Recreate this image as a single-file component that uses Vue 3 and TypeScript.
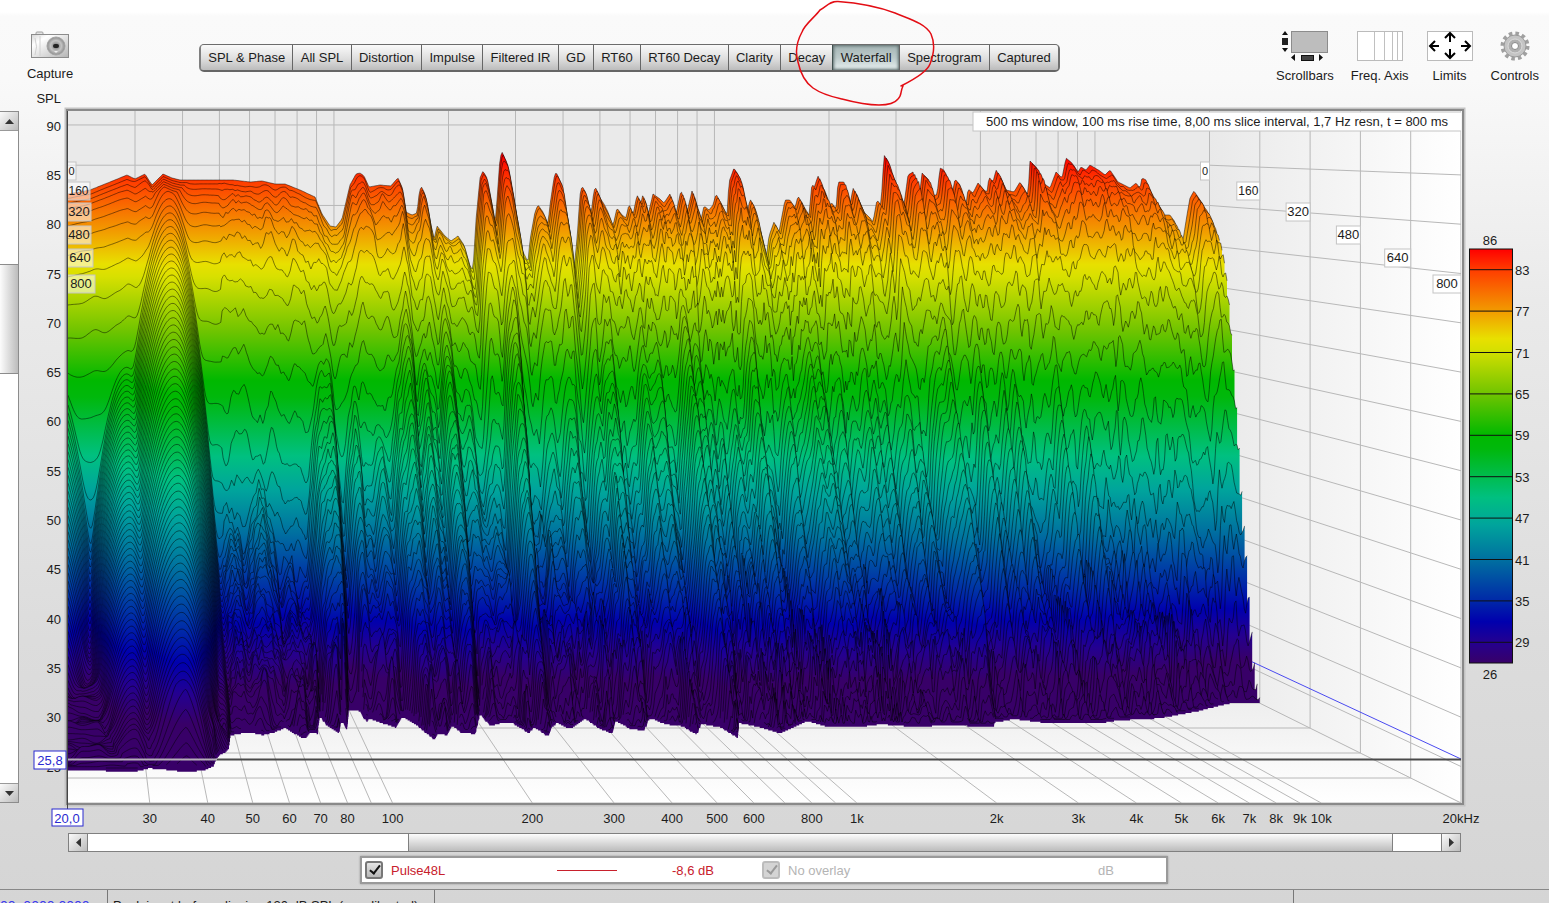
<script setup lang="ts">
import { ref } from 'vue'

type Point = [number, number]

const tabs = [
  'SPL & Phase', 'All SPL', 'Distortion', 'Impulse', 'Filtered IR', 'GD', 'RT60',
  'RT60 Decay', 'Clarity', 'Decay', 'Waterfall', 'Spectrogram', 'Captured',
]
const activeTab = ref('Waterfall')
const traceVisible = ref(true)
const overlayVisible = ref(true)

/* Plot geometry: s runs from 0 (back plane, t = 0) to 1 (front plane, t = 800 ms) */
const LEFT = 68
const RIGHT = 1461
const TOP = 111
const BOTTOM = 803
const BACK_WIDTH = 1141.5
const DEPTH_WIDTH = 251.5
const FLOOR_DB = 21.3

const floorY = (s: number) => 678 + 125 * s
const dbScale = (s: number) => 8.05 + 1.81 * s
const yOf = (db: number, s: number) => floorY(s) - (db - FLOOR_DB) * dbScale(s)
const xOf = (u: number, s: number) => LEFT + u * (BACK_WIDTH + DEPTH_WIDTH * s)
const uOfFreq = (f: number) => Math.log10(f / 20) / 3

const dbTicks = [90, 85, 80, 75, 70, 65, 60, 55, 50, 45, 40, 35, 30, 25]
const freqs = [
  30, 40, 50, 60, 70, 80, 90, 100, 200, 300, 400, 500, 600, 700, 800, 900,
  1000, 2000, 3000, 4000, 5000, 6000, 7000, 8000, 9000, 10000,
]
const freqLabels = freqs
  .filter((f) => f !== 90 && f !== 700 && f !== 900)
  .map((f) => ({ x: xOf(uOfFreq(f), 1), text: f >= 1000 ? `${f / 1000}k` : `${f}` }))

const timeTags = [
  { t: 0, y: 171, w: 9, size: 11 },
  { t: 160, y: 191, w: 23, size: 12 },
  { t: 320, y: 212, w: 24, size: 13 },
  { t: 480, y: 235, w: 24, size: 13 },
  { t: 640, y: 258, w: 26, size: 13 },
  { t: 800, y: 284, w: 28, size: 13 },
].map((tag) => ({ ...tag, right: xOf(1, tag.t / 800) }))

const palette = [
  { db: 86, color: '#ff0000' },
  { db: 83, color: '#ff3c00' },
  { db: 77, color: '#f29b00' },
  { db: 73, color: '#e8e000' },
  { db: 71.5, color: '#d8e000' },
  { db: 65, color: '#70c400' },
  { db: 59, color: '#00b800' },
  { db: 57, color: '#00b80c' },
  { db: 50, color: '#00c080' },
  { db: 46, color: '#00a49c' },
  { db: 41, color: '#0070a0' },
  { db: 35, color: '#0028a8' },
  { db: 32, color: '#0000ae' },
  { db: 29, color: '#240090' },
  { db: 26, color: '#380068' },
]
const scaleTicks = [83, 77, 71, 65, 59, 53, 47, 41, 35, 29]
const scaleY = (db: number) => 249 + (86 - db) * 6.9

/* Measured response at t = 0 */
const response: Point[] = [
  [68, 194], [90, 190], [110, 182], [127, 175], [135, 179], [145, 174], [152, 185], [163, 174],
  [172, 178], [180, 180], [210, 180], [233, 180], [250, 182], [262, 181], [275, 184], [285, 184],
  [300, 190], [315, 197], [322, 214], [330, 226], [336, 227], [342, 219], [350, 185], [356, 174],
  [360, 173], [364, 176], [369, 187], [380, 185], [391, 186], [395, 181], [398, 178], [402, 187],
  [406, 212], [412, 215], [417, 213], [419, 195], [421, 186], [425, 194], [431, 225], [434, 240],
  [437, 226], [445, 236], [451, 241], [458, 236], [464, 245], [470, 266], [473, 270], [476, 220],
  [480, 178], [483, 171], [487, 178], [492, 204], [495, 225], [497, 200], [500, 158], [502, 152],
  [507, 163], [512, 190], [516, 212], [522, 250], [528, 262], [530, 240], [535, 212], [538, 205],
  [543, 212], [548, 224], [550, 205], [554, 178], [556, 172], [562, 185], [568, 225], [573, 278],
  [577, 240], [580, 195], [582, 186], [586, 193], [591, 215], [594, 190], [596, 188], [600, 198],
  [604, 204], [608, 212], [613, 226], [617, 208], [622, 215], [626, 218], [629, 204], [633, 215],
  [637, 195], [641, 203], [643, 194], [648, 215], [653, 194], [660, 199], [664, 203], [670, 194],
  [676, 214], [681, 190], [687, 212], [692, 191], [698, 210], [701, 220], [704, 206], [709, 210],
  [713, 205], [716, 194], [722, 205], [727, 215], [729, 182], [734, 168], [740, 178], [745, 205],
  [747, 215], [750, 199], [755, 208], [762, 240], [766, 260], [769, 236], [774, 222], [779, 232],
  [785, 200], [790, 200], [795, 208], [798, 196], [803, 205], [809, 215], [812, 183], [814, 188],
  [818, 176], [824, 190], [829, 205], [832, 203], [836, 210], [838, 182], [844, 182], [850, 205],
  [853, 188], [858, 198], [864, 212], [870, 218], [873, 222], [877, 200], [881, 205], [884, 155],
  [889, 163], [893, 178], [900, 195], [904, 205], [908, 175], [913, 172], [919, 200], [922, 173],
  [929, 180], [933, 195], [937, 195], [940, 168], [944, 170], [948, 182], [952, 195], [955, 179],
  [960, 185], [966, 205], [968, 189], [973, 193], [978, 183], [984, 190], [987, 192], [989, 177],
  [993, 182], [996, 170], [1002, 180], [1006, 190], [1014, 192], [1020, 182], [1028, 195],
  [1030, 161], [1037, 168], [1042, 182], [1050, 188], [1056, 172], [1062, 178], [1066, 158],
  [1072, 163], [1078, 172], [1081, 167], [1086, 170], [1090, 165], [1100, 171], [1105, 175],
  [1110, 170], [1118, 182], [1130, 188], [1136, 183], [1140, 188], [1142, 178], [1146, 180],
  [1152, 195], [1158, 205], [1163, 215], [1170, 215], [1175, 222], [1180, 238], [1183, 240],
  [1187, 215], [1190, 198], [1194, 191], [1200, 200], [1210, 218],
]

/* Where each frequency has decayed below the floor of the plot */
const fadeOut: Point[] = [
  [68, 771], [90, 771], [110, 772], [138, 772], [150, 769], [170, 771], [187, 773], [205, 771],
  [214, 767], [217, 760], [222, 755], [229, 751], [231, 736], [250, 733], [262, 736], [275, 733],
  [285, 729], [300, 738], [307, 738], [312, 733], [318, 735], [320, 718], [325, 725], [340, 735],
  [341, 722], [347, 733], [349, 711], [358, 711], [366, 723], [370, 720], [385, 725], [397, 729],
  [403, 718], [415, 725], [434, 741], [440, 734], [447, 737], [453, 727], [460, 733], [476, 735],
  [480, 716], [490, 727], [505, 723], [512, 724], [530, 735], [534, 728], [548, 738], [552, 729],
  [557, 724], [570, 730], [585, 720], [600, 730], [613, 735], [616, 722], [630, 730], [645, 731],
  [650, 719], [665, 725], [682, 727], [697, 736], [702, 725], [720, 728], [738, 739], [740, 724],
  [755, 727], [780, 734], [795, 728], [808, 722], [825, 727], [860, 728], [880, 725], [920, 728],
  [940, 726], [975, 727], [994, 727], [996, 723], [1014, 720], [1040, 723], [1068, 724],
  [1107, 723], [1120, 721], [1160, 719], [1198, 712], [1214, 708], [1231, 704], [1262, 703],
]

function interpolate(points: Point[], x: number): number {
  if (x <= points[0][0]) return points[0][1]
  for (let i = 1; i < points.length; i++) {
    if (x <= points[i][0]) {
      const [x0, y0] = points[i - 1]
      const [x1, y1] = points[i]
      return y0 + ((x - x0) / (x1 - x0 || 1)) * (y1 - y0)
    }
  }
  return points[points.length - 1][1]
}

let seed = 48271
function random(): number {
  seed = (seed * 1664525 + 1013904223) >>> 0
  return seed / 4294967296
}

function hash(a: number, b: number): number {
  let h = (a * 374761393 + b * 668265263) | 0
  h = Math.imul(h ^ (h >>> 13), 1274126177)
  return ((h ^ (h >>> 16)) >>> 0) / 2147483648 - 1
}

function noise(x: number, y: number): number {
  const xi = Math.floor(x)
  const yi = Math.floor(y)
  const fx = (1 - Math.cos((x - xi) * Math.PI)) / 2
  const fy = y - yi
  const a = hash(xi, yi) * (1 - fx) + hash(xi + 1, yi) * fx
  const b = hash(xi, yi + 1) * (1 - fx) + hash(xi + 1, yi + 1) * fx
  return a * (1 - fy) + b * fy
}

/* One resonance: its place, starting level, decay per slice and how steeply each side falls */
interface Mode { x: number; level: number; rate: number; below: number; above: number }

const endPoints: Point[] = fadeOut.map(([x, y]) => {
  const s = (y - 678) / 125
  return [((x - LEFT) / (BACK_WIDTH + DEPTH_WIDTH * s)) * BACK_WIDTH, s * 100]
})
const topPoints: Point[] = response.map(([x, y]) => [x - LEFT, FLOOR_DB + (678 - y) / dbScale(0)])

function buildModes(): Mode[] {
  const modes: Mode[] = [
    { x: -14, level: 70, rate: 0.85, below: 0.014, above: 0.014 },
    { x: 57, level: 68, rate: 0.62, below: 0.016, above: 0.03 },
    { x: 76, level: 84, rate: 1.9, below: 0.03, above: 0.03 },
    { x: 100, level: 86.5, rate: 0.8, below: 0.013, above: 0.018 },
    { x: 158, level: 52, rate: 0.62, below: 0.05, above: 0.04 },
    { x: 186, level: 60, rate: 0.9, below: 0.06, above: 0.06 },
    { x: 212, level: 50, rate: 0.7, below: 0.06, above: 0.06 },
    { x: 249, level: 74, rate: 1.25, below: 0.05, above: 0.05 },
  ]
  for (let i = 1; i < topPoints.length - 1; i++) {
    const [x, level] = topPoints[i]
    if (x < 270 || level < topPoints[i - 1][1] || level < topPoints[i + 1][1]) continue
    const life = interpolate(endPoints, x)
    const sharp = 0.05 + x * 0.00018
    modes.push({
      x,
      level: level - (x > 930 ? 3 : 0.3),
      rate: ((level - FLOOR_DB) / life) * (0.95 + 0.6 * random()),
      below: sharp,
      above: sharp,
    })
  }
  for (let i = 0; i < 330; i++) {
    const x = 135 + Math.pow(random(), 0.85) * 1006
    const life = interpolate(endPoints, x)
    const level = x < 240 ? 38 + 16 * random() : x > 900 ? 40 + 26 * random() : 46 + 32 * random()
    const sharp = (0.06 + x * 0.00035) * (0.5 + random())
    modes.push({
      x,
      level,
      rate: ((level - FLOOR_DB) / life) * (0.95 + 0.4 * random()),
      below: sharp,
      above: sharp * (0.6 + 0.8 * random()),
    })
  }
  return modes
}

const directDrop = [
  0, 0.5, 1.1, 1.8, 2.7, 3.9, 5.4, 7.4, 10, 13.4, 17.4, 22, 27, 32, 36.5, 40.5, 44, 47, 50, 53, 56, 59, 62, 65,
]

interface Slice { id: number; d: string; line: string; y1: number; y2: number }

function buildSlices(): Slice[] {
  const modes = buildModes()
  const slices: Slice[] = []
  const step = 1.3
  const columns = Math.round(BACK_WIDTH / step)
  for (let i = 0; i <= 77; i++) {
    const s = i / 100
    const base = floorY(s)
    let line = ''
    let fill = ''
    let open = false
    let lastX = 0
    for (let c = 0; c <= columns; c++) {
      const x = c * step
      const end = interpolate(endPoints, x)
      const sx = xOf(x / BACK_WIDTH, s)
      if (i > end) {
        if (open) fill += `L${lastX.toFixed(1)} ${base.toFixed(1)}Z`
        open = false
        continue
      }
      const top = interpolate(topPoints, x)
      let level = top
      if (i > 0) {
        const grain = Math.max(3, 13 - x * 0.013)
        const rough = Math.min(4.2, i * 0.25) * (x < 150 ? 0.25 : 1)
        const wobble = noise(x / grain, i / 3.2) * rough
        const drop = i < directDrop.length ? directDrop[i] : 70
        const direct = top - drop + wobble
        const reach = x < 110 ? 10 : x < 240 ? 16 : 28
        const tail = FLOOR_DB + 1 + reach * Math.pow(1 - i / (end + 1), 1.1) + wobble * 1.2
        let sum = Math.exp(direct / 1.6) + Math.exp(tail / 1.6)
        for (const mode of modes) {
          const dx = x - mode.x
          const l = mode.level - mode.rate * i - (dx < 0 ? mode.below : mode.above) * dx * dx
          if (l > FLOOR_DB) sum += Math.exp(l / 1.6)
        }
        const fine = x < 150 ? 0 : noise(x / 2.6, i / 1.7) * Math.min(1.1, i * 0.07)
        level = Math.min(1.6 * Math.log(sum) + fine, top - 0.3 * i)
        level = FLOOR_DB + (level - FLOOR_DB) * Math.min(1, (end - i + 1) / 6)
        level = Math.max(level, FLOOR_DB + 0.4)
      }
      const px = sx.toFixed(1)
      const py = yOf(level, s).toFixed(1)
      if (!open) {
        fill += `M${px} ${base.toFixed(1)}L${px} ${py}`
        line += `M${px} ${py}`
        open = true
      } else {
        fill += `L${px} ${py}`
        line += `L${px} ${py}`
      }
      lastX = sx
    }
    if (open) fill += `L${lastX.toFixed(1)} ${base.toFixed(1)}Z`
    slices.push({ id: i, d: fill, line, y1: yOf(86, s), y2: yOf(26, s) })
  }
  return slices
}

const slices = buildSlices()
</script>

<template>
  <div class="app">
    <header class="toolbar">
      <button class="tool capture" type="button">
        <svg width="40" height="30" viewBox="0 0 40 30" aria-hidden="true">
          <defs>
            <linearGradient id="camBody" x1="0" y1="0" x2="1" y2="1">
              <stop offset="0" stop-color="#d4d4d4" />
              <stop offset="0.25" stop-color="#ffffff" />
              <stop offset="1" stop-color="#b4b4b4" />
            </linearGradient>
            <radialGradient id="camLens">
              <stop offset="0" stop-color="#555" />
              <stop offset="0.3" stop-color="#999" />
              <stop offset="0.6" stop-color="#c4c4c4" />
              <stop offset="1" stop-color="#8c8c8c" />
            </radialGradient>
          </defs>
          <rect x="6" y="2" width="7" height="4" rx="1" fill="#e4e4e4" stroke="#a0a0a0" />
          <rect x="1.500" y="4.500" width="37" height="23" fill="url(#camBody)" stroke="#8c8c8c" />
          <path d="M5 8q3 9 0 17M10 6v20" stroke="#d0d0d0" fill="none" />
          <circle cx="26" cy="16" r="9" fill="url(#camLens)" stroke="#a4a4a4" />
          <rect x="23" y="14" width="6" height="4" rx="2" fill="#222" />
          <path d="M24 21l2 2 2-2z" fill="#eee" />
        </svg>
        <span>Capture</span>
      </button>

      <nav class="tabs" aria-label="Graph type">
        <button
          v-for="tab in tabs"
          :key="tab"
          type="button"
          class="tab"
          :class="{ active: tab === activeTab }"
          @click="activeTab = tab"
        >
          {{ tab }}
          <svg v-if="tab === 'Waterfall'" class="marker" width="146" height="110" viewBox="794 -2 146 110" aria-hidden="true">
            <path
              d="M902 86C914 80 928 72 931 64C935 54 936 43 932 34C926 23 910 19 896 13C880 7 860 3 839 1.500C831 1 828 6 821 10C816 17 806 24 803 32C797 43 796 52 799 62C802 76 807 83 814 88C824 95 834 97 843 99C858 103 868 105 880 105C890 105 896 103 899 99C903 96 901 92 904 86"
              fill="none"
              stroke="#e30d14"
              stroke-width="1.500"
              stroke-linecap="round"
            />
          </svg>
        </button>
      </nav>

      <div class="tools">
        <button class="tool" type="button">
          <svg width="48" height="32" viewBox="0 0 48 32" aria-hidden="true">
            <rect x="10.500" y="1.500" width="36" height="21" fill="#bdbdbd" stroke="#8c8c8c" />
            <path d="M1 5l3-4 3 4zM1 18l3 4 3-4zM14 24v7l-4-3.500zM38 24v7l4-3.500z" fill="#111" />
            <rect x="1" y="8" width="6" height="7" fill="#222" />
            <rect x="20.500" y="25.500" width="12" height="5" fill="#444" stroke="#111" />
          </svg>
          <span>Scrollbars</span>
        </button>
        <button class="tool" type="button">
          <svg width="48" height="32" viewBox="0 0 48 32" aria-hidden="true">
            <rect x="1.500" y="1.500" width="45" height="29" fill="#fff" stroke="#bbb" />
            <path d="M18.500 2v28M28.500 2v28M36.500 2v28M41.500 2v28" stroke="#c0c0c0" />
          </svg>
          <span>Freq. Axis</span>
        </button>
        <button class="tool" type="button">
          <svg width="48" height="32" viewBox="0 0 48 32" aria-hidden="true">
            <rect x="1.500" y="1.500" width="45" height="29" fill="#fff" stroke="#bbb" />
            <g fill="none" stroke="#000" stroke-width="2">
              <path d="M24 12V4M19 8l5-5 5 5M24 19v8M19 23l5 5 5-5" />
              <path d="M13 16H5M9 11l-5 5 5 5M35 16h8M39 11l5 5-5 5" />
            </g>
          </svg>
          <span>Limits</span>
        </button>
        <button class="tool" type="button">
          <svg width="32" height="32" viewBox="0 0 32 32" aria-hidden="true">
            <circle cx="16" cy="16" r="12.500" fill="none" stroke="#a0a0a0" stroke-width="4" stroke-dasharray="3.500 3.045" />
            <circle cx="16" cy="16" r="11" fill="#c4c4c4" stroke="#999" />
            <circle cx="16" cy="16" r="7" fill="#b0b0b0" stroke="#dcdcdc" />
            <circle cx="16" cy="16" r="3.500" fill="#fff" stroke="#888" />
          </svg>
          <span>Controls</span>
        </button>
      </div>
    </header>

    <main class="graph">
      <div class="vscroll">
        <button type="button" aria-label="Scroll up"><svg width="9" height="5" viewBox="0 0 9 5"><path d="M0 5L4.500 0 9 5z" /></svg></button>
        <div class="space above"></div>
        <div class="thumb" role="scrollbar" aria-label="SPL axis position" aria-orientation="vertical" aria-valuenow="32"></div>
        <div class="space below"></div>
        <button type="button" aria-label="Scroll down"><svg width="9" height="5" viewBox="0 0 9 5"><path d="M0 0h9L4.500 5z" /></svg></button>
      </div>

      <svg class="chart" viewBox="19 90 1530 740" role="img" aria-label="Waterfall graph">
        <defs>
          <linearGradient id="wall" x1="0" x2="1" y1="0" y2="0">
            <stop offset="0" stop-color="#e9e9e9" />
            <stop offset="1" stop-color="#ffffff" />
          </linearGradient>
          <linearGradient id="ground" x1="0" x2="0" y1="0" y2="1">
            <stop offset="0" stop-color="#eaeaea" />
            <stop offset="1" stop-color="#ffffff" />
          </linearGradient>
          <linearGradient id="legendScale" x1="0" x2="0" y1="0" y2="1">
            <stop v-for="p in palette" :key="p.db" :offset="(86 - p.db) / 60" :stop-color="p.color" />
          </linearGradient>
          <linearGradient
            v-for="slice in slices"
            :id="`slice${slice.id}`"
            :key="slice.id"
            gradientUnits="userSpaceOnUse"
            x1="0"
            x2="0"
            :y1="slice.y1"
            :y2="slice.y2"
          >
            <stop v-for="p in palette" :key="p.db" :offset="(86 - p.db) / 60" :stop-color="p.color" />
          </linearGradient>
          <clipPath id="plotArea"><rect :x="LEFT" :y="TOP" :width="RIGHT - LEFT" :height="BOTTOM - TOP" /></clipPath>
        </defs>

        <rect x="66" y="109" width="1398" height="696" fill="none" stroke="#c4c4c4" stroke-width="3" />
        <rect x="67" y="110" width="1396" height="694" fill="none" stroke="#8a8a8a" stroke-width="2" />

        <g clip-path="url(#plotArea)">
          <rect :x="LEFT" :y="TOP" :width="BACK_WIDTH" height="567" fill="#eaeaea" />
          <path d="M1209 111H1462V803L1209 678z" fill="url(#wall)" />
          <path d="M68 678H1209L1461 803H68z" fill="url(#ground)" />

          <g class="grid">
            <line v-for="f in freqs" :key="`b${f}`" :x1="xOf(uOfFreq(f), 0)" :x2="xOf(uOfFreq(f), 0)" :y1="TOP" y2="678" />
            <line v-for="f in freqs" :key="`f${f}`" :x1="xOf(uOfFreq(f), 0)" :x2="xOf(uOfFreq(f), 1)" y1="678" :y2="BOTTOM" />
            <polyline
              v-for="db in dbTicks"
              :key="db"
              :points="`68,${yOf(db, 0)} ${xOf(1, 0)},${yOf(db, 0)} 1461,${yOf(db, 1)}`"
            />
            <polyline
              v-for="tag in timeTags"
              :key="tag.t"
              :points="`${tag.right},111 ${tag.right},${floorY(tag.t / 800)} 68,${floorY(tag.t / 800)}`"
            />
            <line x1="1209" y1="678" x2="1461" y2="803" />
          </g>
          <line class="cursor-wall" x1="1209" :y1="yOf(25.8, 0)" x2="1461" y2="759" />
          <line x1="68" y1="759.500" x2="1461" y2="759.500" stroke="#4a4a4a" stroke-width="2" />

          <g v-for="slice in slices" :key="slice.id">
            <path :d="slice.d" :fill="`url(#slice${slice.id})`" />
            <path :d="slice.line" class="contour" />
          </g>
          <line x1="68" y1="759.500" x2="217" y2="759.500" stroke="#b4adb8" stroke-width="2" />

          <g v-for="tag in timeTags" :key="tag.t" class="time-tag">
            <rect x="67" :y="tag.y - 9" :width="tag.w" height="18" />
            <text :x="67 + tag.w / 2" :y="tag.y + 4" :font-size="tag.size">{{ tag.t }}</text>
            <rect :x="tag.right - tag.w" :y="tag.y - 9" :width="tag.w" height="18" class="solid" />
            <text :x="tag.right - tag.w / 2" :y="tag.y + 4" :font-size="tag.size">{{ tag.t }}</text>
          </g>

          <rect x="973" y="112" width="489" height="19" fill="#fff" stroke="#c4c4c4" />
          <text x="1217" y="126" text-anchor="middle">500 ms window, 100 ms rise time, 8,00 ms slice interval, 1,7 Hz resn, t = 800 ms</text>
        </g>

        <text x="61" y="103" text-anchor="end">SPL</text>
        <text v-for="db in dbTicks" :key="db" x="61" :y="yOf(db, 1) + 5" text-anchor="end">{{ db }}</text>
        <text v-for="label in freqLabels" :key="label.text" :x="label.x" y="823" text-anchor="middle">{{ label.text }}</text>
        <text x="1461" y="823" text-anchor="middle">20kHz</text>

        <line x1="67.500" y1="111" x2="67.500" y2="809" stroke="#444" />
        <g class="readout">
          <rect x="34" y="751" width="32" height="18" />
          <text x="50" y="765">25,8</text>
          <rect x="52" y="809" width="31" height="17" />
          <text x="67" y="823">20,0</text>
        </g>

        <rect x="1469.500" y="249" width="43" height="414" fill="url(#legendScale)" stroke="#111" />
        <g v-for="db in scaleTicks" :key="db">
          <line x1="1469" x2="1513" :y1="scaleY(db)" :y2="scaleY(db)" stroke="#111" />
          <text x="1515" :y="scaleY(db) + 5">{{ db }}</text>
        </g>
        <text x="1490" y="245" text-anchor="middle">86</text>
        <text x="1490" y="679" text-anchor="middle">26</text>
      </svg>
    </main>

    <div class="hscroll">
      <button type="button" aria-label="Scroll left"><svg width="5" height="9" viewBox="0 0 5 9"><path d="M5 0v9L0 4.500z" /></svg></button>
      <div class="space before"></div>
      <div class="thumb" role="scrollbar" aria-label="Frequency axis position" aria-orientation="horizontal" aria-valuenow="87"></div>
      <div class="space after"></div>
      <button type="button" aria-label="Scroll right"><svg width="5" height="9" viewBox="0 0 5 9"><path d="M0 0v9l5-4.500z" /></svg></button>
    </div>

    <section class="legend" aria-label="Traces">
      <label class="trace">
        <input v-model="traceVisible" type="checkbox" />
        <span class="name">Pulse48L</span>
      </label>
      <span class="swatch"></span>
      <span class="value">-8,6 dB</span>
      <label class="trace overlay">
        <input v-model="overlayVisible" type="checkbox" disabled />
        <span class="name">No overlay</span>
      </label>
      <span class="unit">dB</span>
    </section>

    <footer class="status">
      <span class="counter">00, 0000 0000</span>
      <span class="message">Peak input before clipping 120 dB SPL (uncalibrated)</span>
      <span class="middle"></span>
      <span class="rest"></span>
    </footer>
  </div>
</template>

<style>
body {
  margin: 0;
}
</style>

<style scoped>
.app {
  display: flex;
  flex-direction: column;
  height: 100vh;
  overflow: hidden;
  font-family: "Liberation Sans", Arial, sans-serif;
  font-size: 13px;
  color: #1c1c1c;
  background: linear-gradient(#ffffff 0, #ffffff 12px, #fafafa 16px, #f9f9f9 80px, #eaeaea 300px, #dcdcdc 640px, #d5d5d5 100%);
}

button {
  font: inherit;
  color: inherit;
}

.toolbar {
  display: flex;
  flex: none;
  align-items: flex-start;
  height: 90px;
  box-sizing: border-box;
  padding: 30px 10px 0 26px;
}

.tool {
  display: flex;
  flex-direction: column;
  align-items: center;
  padding: 0;
  border: 0;
  background: none;
  gap: 7px;
  line-height: 14px;
  white-space: nowrap;
}

.capture {
  width: 48px;
}

.tabs {
  display: flex;
  width: 861px;
  height: 28px;
  margin: 14px auto 0 125px;
  box-sizing: border-box;
  border: 1px solid #6c6c6c;
  border-bottom: 2px solid #666;
  border-left: 2px solid #808080;
  border-right: 2px solid #707070;
  border-radius: 5px;
  background: #ccc;
}

.tab {
  position: relative;
  flex: 1 1 auto;
  padding: 0 4px;
  border: 0;
  border-left: 1px solid #666;
  background: linear-gradient(#fafafa, #dedede 55%, #bcbcbc);
  white-space: nowrap;
}

.tab:first-child {
  border-left: 0;
  border-radius: 3px 0 0 3px;
}

.tab:last-child {
  border-radius: 0 3px 3px 0;
}

.tab.active {
  border-left: 1px solid #41514f;
  background: linear-gradient(#a4b4b4, #bccaca 50%, #e8f0f0);
  box-shadow: inset 0 0 3px 1px #5c6c6c;
}

.marker {
  position: absolute;
  z-index: 2;
  left: -40px;
  top: -47px;
  pointer-events: none;
}

.tools {
  display: flex;
  gap: 17px;
}

.graph {
  display: flex;
  flex: none;
  align-items: stretch;
}

.chart {
  display: block;
  flex: 1;
  min-width: 0;
  height: auto;
  font-family: "Liberation Sans", Arial, sans-serif;
  font-size: 13px;
  fill: #1c1c1c;
}

.grid line,
.grid polyline {
  fill: none;
  stroke: #b8b8b8;
  stroke-width: 1;
}

.cursor-wall {
  stroke: #4a4af0;
}

.contour {
  fill: none;
  stroke: #000;
  stroke-opacity: 0.6;
  stroke-width: 0.8;
}

.time-tag rect {
  fill: #fff;
  fill-opacity: 0.55;
  stroke: #c4c4c4;
}

.time-tag rect.solid {
  fill-opacity: 1;
}

.time-tag text,
.readout text {
  text-anchor: middle;
}

.readout rect {
  fill: #fff;
  stroke: #2a2ad0;
}

.readout text {
  fill: #2a2ad0;
}

.vscroll {
  display: flex;
  flex: none;
  flex-direction: column;
  width: 19px;
  margin: 21px 0 27px;
  box-sizing: border-box;
  border: 1px solid #8c8c8c;
  border-left: 0;
  background: #fff;
}

.vscroll button,
.hscroll button {
  display: flex;
  flex: none;
  align-items: center;
  justify-content: center;
  width: 18px;
  height: 18px;
  padding: 0;
  border: 0;
  background: linear-gradient(135deg, #fafafa, #bcbcbc);
  fill: #333;
}

.vscroll .above {
  flex: 133;
  border-top: 1px solid #999;
}

.vscroll .thumb {
  flex: 109;
  border: 1px solid #8c8c8c;
  border-width: 1px 0;
  background: linear-gradient(90deg, #fcfcfc, #bcbcbc);
}

.vscroll .below {
  flex: 410;
  border-bottom: 1px solid #999;
}

.hscroll {
  display: flex;
  flex: none;
  height: 19px;
  margin: 3px 88px 0 68px;
  box-sizing: border-box;
  border: 1px solid #808080;
  background: #fff;
}

.hscroll button {
  height: 17px;
}

.hscroll .before {
  flex: 320;
  border-left: 1px solid #808080;
}

.hscroll .thumb {
  flex: 984;
  border: 1px solid #808080;
  border-width: 0 1px;
  background: linear-gradient(#fcfcfc, #bcbcbc);
}

.hscroll .after {
  flex: 48;
  border-right: 1px solid #808080;
}

.legend {
  display: flex;
  flex: none;
  align-items: center;
  width: 808px;
  height: 28px;
  margin: 4px 0 0 360px;
  box-sizing: border-box;
  border: 2px solid #9a9a9a;
  box-shadow: 0 0 2px #999;
  background: #fff;
  color: #c8202c;
}

.trace {
  display: flex;
  align-items: center;
  gap: 8px;
  width: 192px;
  padding-left: 3px;
}

.trace input {
  position: relative;
  appearance: none;
  flex: none;
  width: 18px;
  height: 18px;
  margin: 0;
  border: 2px solid #777;
  border-radius: 3px;
  background: linear-gradient(#e4e4e4, #b8b8b8);
}

.trace input:checked::after {
  content: "";
  position: absolute;
  left: 5px;
  top: 0;
  width: 4px;
  height: 9px;
  border: solid #111;
  border-width: 0 2px 2px 0;
  transform: rotate(38deg);
}

.overlay {
  color: #b4b4b4;
}

.overlay input {
  border-color: #bcbcbc;
  background: #d4d4d4;
}

.overlay input:checked::after {
  border-color: #999;
}

.swatch {
  width: 60px;
  height: 1px;
  background: #c8202c;
}

.value {
  width: 87px;
  margin-left: 55px;
}

.unit {
  margin-left: 144px;
  color: #b4b4b4;
}

.status {
  display: flex;
  flex: none;
  height: 30px;
  margin-top: 5px;
  border-top: 1px solid #888;
  line-height: 16px;
  white-space: nowrap;
}

.status span {
  box-sizing: border-box;
  border-right: 1px solid #777;
  padding-top: 8px;
}

.status .counter {
  width: 108px;
  font-size: 14px;
  color: #3a3af0;
}

.status .message {
  width: 327px;
  padding-left: 5px;
}

.status .middle {
  flex: 859;
}

.status .rest {
  flex: 255;
  border-right: 0;
}
</style>
